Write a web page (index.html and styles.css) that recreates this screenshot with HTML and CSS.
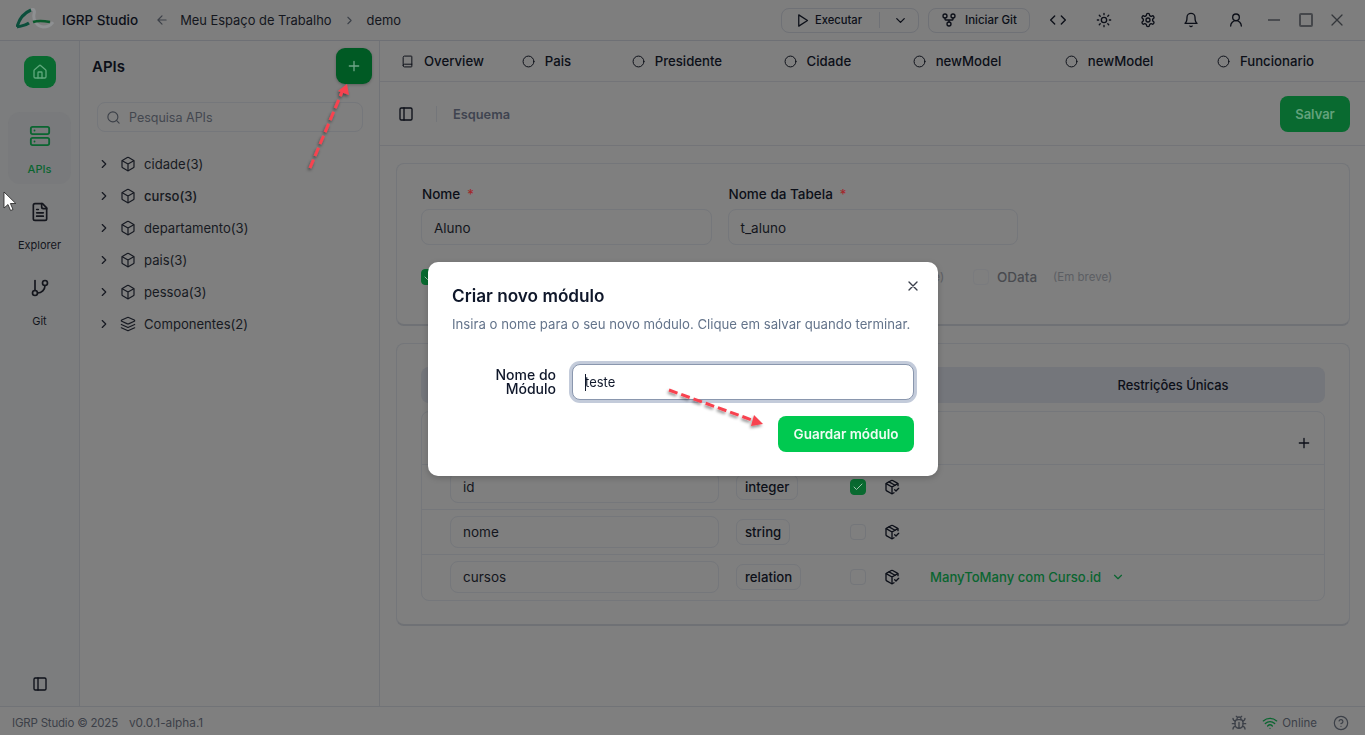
FILE: index.html
```html
<!DOCTYPE html>
<html lang="pt">
<head>
  <meta charset="UTF-8" />
  <meta name="viewport" content="width=device-width, initial-scale=1.0"/>
  <title>IGRP Studio</title>
  <link rel="stylesheet" href="styles.css">
</head>
<body>
  <svg class="sprite" xmlns="http://www.w3.org/2000/svg">
    <symbol id="i-house" viewBox="0 0 24 24"><path d="M15 21v-8a1 1 0 0 0-1-1h-4a1 1 0 0 0-1 1v8"/><path d="M3 10a2 2 0 0 1 .709-1.528l7-5.999a2 2 0 0 1 2.582 0l7 5.999A2 2 0 0 1 21 10v9a2 2 0 0 1-2 2H5a2 2 0 0 1-2-2z"/></symbol>
    <symbol id="i-server" viewBox="0 0 24 24"><rect width="20" height="8" x="2" y="2" rx="2"/><rect width="20" height="8" x="2" y="14" rx="2"/><path d="M6 6h.01M6 18h.01"/></symbol>
    <symbol id="i-file" viewBox="0 0 24 24"><path d="M15 2H6a2 2 0 0 0-2 2v16a2 2 0 0 0 2 2h12a2 2 0 0 0 2-2V7Z"/><path d="M14 2v4a2 2 0 0 0 2 2h4"/><path d="M10 9H8M16 13H8M16 17H8"/></symbol>
    <symbol id="i-branch" viewBox="0 0 24 24"><path d="M6 3v12"/><circle cx="18" cy="6" r="3"/><circle cx="6" cy="18" r="3"/><path d="M18 9a9 9 0 0 1-9 9"/></symbol>
    <symbol id="i-panel" viewBox="0 0 24 24"><rect width="18" height="18" x="3" y="3" rx="2"/><path d="M9 3v18"/></symbol>
    <symbol id="i-search" viewBox="0 0 24 24"><circle cx="11" cy="11" r="8"/><path d="m21 21-4.3-4.3"/></symbol>
    <symbol id="i-right" viewBox="0 0 24 24"><path d="m9 18 6-6-6-6"/></symbol>
    <symbol id="i-down" viewBox="0 0 24 24"><path d="m6 9 6 6 6-6"/></symbol>
    <symbol id="i-box" viewBox="0 0 24 24"><path d="M21 8a2 2 0 0 0-1-1.73l-7-4a2 2 0 0 0-2 0l-7 4A2 2 0 0 0 3 8v8a2 2 0 0 0 1 1.73l7 4a2 2 0 0 0 2 0l7-4A2 2 0 0 0 21 16Z"/><path d="m3.3 7 8.7 5 8.7-5M12 22V12"/></symbol>
    <symbol id="i-layers" viewBox="0 0 24 24"><path d="M12.83 2.18a2 2 0 0 0-1.66 0L2.6 6.08a1 1 0 0 0 0 1.83l8.58 3.91a2 2 0 0 0 1.66 0l8.58-3.9a1 1 0 0 0 0-1.83Z"/><path d="m22 17.65-9.17 4.16a2 2 0 0 1-1.66 0L2 17.65"/><path d="m22 12.65-9.17 4.16a2 2 0 0 1-1.66 0L2 12.65"/></symbol>
    <symbol id="i-back" viewBox="0 0 24 24"><path d="m12 19-7-7 7-7M19 12H5"/></symbol>
    <symbol id="i-play" viewBox="0 0 24 24"><polygon points="6 3 20 12 6 21 6 3"/></symbol>
    <symbol id="i-fork" viewBox="0 0 24 24"><circle cx="12" cy="18" r="3"/><circle cx="6" cy="6" r="3"/><circle cx="18" cy="6" r="3"/><path d="M18 9v2c0 .6-.4 1-1 1H7c-.6 0-1-.4-1-1V9M12 12v3"/></symbol>
    <symbol id="i-code" viewBox="0 0 24 24"><path d="m17 18 6-6-6-6M7 6l-6 6 6 6"/></symbol>
    <symbol id="i-sun" viewBox="0 0 24 24"><circle cx="12" cy="12" r="4"/><path d="M12 2v2M12 20v2M4.93 4.93l1.41 1.41M17.66 17.66l1.41 1.41M2 12h2M20 12h2M6.34 17.66l-1.41 1.41M19.07 4.93l-1.41 1.41"/></symbol>
    <symbol id="i-gear" viewBox="0 0 24 24"><path d="M12.22 2h-.44a2 2 0 0 0-2 2v.18a2 2 0 0 1-1 1.73l-.43.25a2 2 0 0 1-2 0l-.15-.08a2 2 0 0 0-2.73.73l-.22.38a2 2 0 0 0 .73 2.73l.15.1a2 2 0 0 1 1 1.72v.51a2 2 0 0 1-1 1.74l-.15.09a2 2 0 0 0-.73 2.73l.22.38a2 2 0 0 0 2.73.73l.15-.08a2 2 0 0 1 2 0l.43.25a2 2 0 0 1 1 1.73V20a2 2 0 0 0 2 2h.44a2 2 0 0 0 2-2v-.18a2 2 0 0 1 1-1.73l.43-.25a2 2 0 0 1 2 0l.15.08a2 2 0 0 0 2.73-.73l.22-.39a2 2 0 0 0-.73-2.73l-.15-.08a2 2 0 0 1-1-1.74v-.5a2 2 0 0 1 1-1.74l.15-.09a2 2 0 0 0 .73-2.73l-.22-.38a2 2 0 0 0-2.73-.73l-.15.08a2 2 0 0 1-2 0l-.43-.25a2 2 0 0 1-1-1.73V4a2 2 0 0 0-2-2z"/><circle cx="12" cy="12" r="3"/></symbol>
    <symbol id="i-bell" viewBox="0 0 24 24"><path d="M6 8a6 6 0 0 1 12 0c0 7 3 9 3 9H3s3-2 3-9"/><path d="M10.3 21a1.94 1.94 0 0 0 3.4 0"/></symbol>
    <symbol id="i-user" viewBox="0 0 24 24"><circle cx="12" cy="8" r="5"/><path d="M20 21a8 8 0 0 0-16 0"/></symbol>
    <symbol id="i-book" viewBox="0 0 24 24"><path d="M4 19.5v-15A2.5 2.5 0 0 1 6.5 2H19a1 1 0 0 1 1 1v18a1 1 0 0 1-1 1H6.5a1 1 0 0 1 0-5H20"/></symbol>
    <symbol id="i-circle" viewBox="0 0 24 24"><circle cx="12" cy="12" r="10"/></symbol>
    <symbol id="i-plus" viewBox="0 0 24 24"><path d="M5 12h14M12 5v14"/></symbol>
    <symbol id="i-x" viewBox="0 0 24 24"><path d="M18 6 6 18M6 6l12 12"/></symbol>
    <symbol id="i-check" viewBox="0 0 24 24"><path d="M20 6 9 17l-5-5"/></symbol>
    <symbol id="i-pack" viewBox="0 0 24 24"><path d="m16 16 2 2 4-4"/><path d="M21 10V8a2 2 0 0 0-1-1.73l-7-4a2 2 0 0 0-2 0l-7 4A2 2 0 0 0 3 8v8a2 2 0 0 0 1 1.73l7 4a2 2 0 0 0 2 0l2-1.14"/><path d="m7.5 4.27 9 5.15"/><path d="M3.29 7 12 12l8.71-5M12 22V12"/></symbol>
    <symbol id="i-bug" viewBox="0 0 24 24"><path d="m8 2 1.88 1.88M14.12 3.88 16 2M9 7.13v-1a3.003 3.003 0 1 1 6 0v1"/><path d="M12 20c-3.3 0-6-2.7-6-6v-3a4 4 0 0 1 4-4h4a4 4 0 0 1 4 4v3c0 3.3-2.7 6-6 6M12 20v-9"/><path d="M6.53 9C4.6 8.8 3 7.1 3 5M6 13H2M3 21c0-2.1 1.7-3.9 3.8-4M20.97 5c0 2.1-1.6 3.8-3.5 4M22 13h-4M17.2 17c2.1.1 3.8 1.9 3.8 4"/></symbol>
    <symbol id="i-wifi" viewBox="0 0 24 24"><path d="M12 20h.01M2 8.82a15 15 0 0 1 20 0M5 12.859a10 10 0 0 1 14 0M8.5 16.429a5 5 0 0 1 7 0"/></symbol>
    <symbol id="i-help" viewBox="0 0 24 24"><circle cx="12" cy="12" r="10"/><path d="M9.09 9a3 3 0 0 1 5.83 1c0 2-3 3-3 3M12 17h.01"/></symbol>
  </svg>

  <header class="titlebar">
    <svg class="logo" viewBox="0 0 38 24" xmlns="http://www.w3.org/2000/svg">
      <path d="M15 2C18 0 19 3 18 6 17 11 20 18 27 19 31 19 35 17 37 14" fill="none" stroke="#8e9092" stroke-width="3"/>
      <path d="M1 19C3 11 8 5 15 2" fill="none" stroke="#0c4f3c" stroke-width="3"/>
      <path d="M1 19C5 18 9 18 13 15" fill="none" stroke="#0c4f3c" stroke-width="3"/>
      <path d="M17 14C23 12 29 13 34 14" fill="none" stroke="#0a5a2c" stroke-width="2.6"/>
    </svg>
    <span class="app-name">IGRP Studio</span>
    <svg class="ico ico-back"><use href="#i-back"/></svg>
    <span class="crumb">Meu Espaço de Trabalho</span>
    <svg class="ico ico-crumb"><use href="#i-right"/></svg>
    <span class="crumb">demo</span>

    <div class="title-actions">
      <div class="run-group">
        <svg class="ico ico-16"><use href="#i-play"/></svg>
        <span>Executar</span>
        <i class="run-sep"></i>
        <svg class="ico ico-16 run-more"><use href="#i-down"/></svg>
      </div>
      <div class="git-btn">
        <svg class="ico ico-16"><use href="#i-fork"/></svg>
        <span>Iniciar Git</span>
      </div>
      <svg class="ico ico-16 act act-code"><use href="#i-code"/></svg>
      <svg class="ico ico-16 act act-sun"><use href="#i-sun"/></svg>
      <svg class="ico ico-16 act"><use href="#i-gear"/></svg>
      <svg class="ico ico-16 act act-bell"><use href="#i-bell"/></svg>
      <svg class="ico ico-16 act act-user"><use href="#i-user"/></svg>
    </div>
    <div class="window-btns">
      <i class="win-min"></i>
      <i class="win-max"></i>
      <svg class="ico win-close"><use href="#i-x"/></svg>
    </div>
  </header>

  <div class="workspace">
    <nav class="rail">
      <div class="home-btn"><svg class="ico ico-16"><use href="#i-house"/></svg></div>
      <div class="rail-item active"><svg class="ico ico-22"><use href="#i-server"/></svg><span>APIs</span></div>
      <div class="rail-item"><svg class="ico ico-20"><use href="#i-file"/></svg><span>Explorer</span></div>
      <div class="rail-item"><svg class="ico ico-20"><use href="#i-branch"/></svg><span>Git</span></div>
      <svg class="ico ico-16 rail-toggle"><use href="#i-panel"/></svg>
    </nav>

    <aside class="panel">
      <div class="panel-head">
        <h2>APIs</h2>
        <div class="add-btn"><svg class="ico ico-16"><use href="#i-plus"/></svg></div>
      </div>
      <div class="search">
        <svg class="ico ico-search"><use href="#i-search"/></svg>
        <span>Pesquisa APIs</span>
      </div>
      <ul class="tree">
        <li><svg class="ico chev"><use href="#i-right"/></svg><svg class="ico ico-16"><use href="#i-box"/></svg><span>cidade(3)</span></li>
        <li class="current"><svg class="ico chev"><use href="#i-right"/></svg><svg class="ico ico-16"><use href="#i-box"/></svg><span>curso(3)</span></li>
        <li><svg class="ico chev"><use href="#i-right"/></svg><svg class="ico ico-16"><use href="#i-box"/></svg><span>departamento(3)</span></li>
        <li><svg class="ico chev"><use href="#i-right"/></svg><svg class="ico ico-16"><use href="#i-box"/></svg><span>pais(3)</span></li>
        <li><svg class="ico chev"><use href="#i-right"/></svg><svg class="ico ico-16"><use href="#i-box"/></svg><span>pessoa(3)</span></li>
        <li><svg class="ico chev"><use href="#i-right"/></svg><svg class="ico ico-16"><use href="#i-layers"/></svg><span>Componentes(2)</span></li>
      </ul>
    </aside>

    <main class="main">
      <div class="tabs">
        <div class="tab tab-first"><svg class="ico ico-tab"><use href="#i-book"/></svg><span>Overview</span></div>
        <div class="tab tab-short"><svg class="ico ico-tab"><use href="#i-circle"/></svg><span>Pais</span></div>
        <div class="tab"><svg class="ico ico-tab"><use href="#i-circle"/></svg><span>Presidente</span></div>
        <div class="tab"><svg class="ico ico-tab"><use href="#i-circle"/></svg><span>Cidade</span></div>
        <div class="tab tab-model"><svg class="ico ico-tab"><use href="#i-circle"/></svg><span>newModel</span></div>
        <div class="tab tab-model"><svg class="ico ico-tab"><use href="#i-circle"/></svg><span>newModel</span></div>
        <div class="tab"><svg class="ico ico-tab"><use href="#i-circle"/></svg><span>Funcionario</span></div>
      </div>

      <div class="toolbar">
        <svg class="ico ico-16"><use href="#i-panel"/></svg>
        <i class="tool-sep"></i>
        <span class="tool-title">Esquema</span>
        <div class="save-btn">Salvar</div>
      </div>

      <div class="content">
        <section class="card card-meta">
          <div class="fields">
            <div class="field">
              <label>Nome <b>*</b></label>
              <div class="text-box">Aluno</div>
            </div>
            <div class="field">
              <label>Nome da Tabela <b>*</b></label>
              <div class="text-box">t_aluno</div>
            </div>
          </div>
          <div class="protocols">
            <div class="check on"><svg class="ico"><use href="#i-check"/></svg></div>
            <span class="soon soon-hidden">(Em breve)</span>
            <div class="check faint"></div>
            <span class="proto-name">OData</span>
            <span class="soon">(Em breve)</span>
          </div>
        </section>

        <section class="card card-cols">
          <div class="subtabs"><span>Restrições Únicas</span></div>
          <div class="grid-box">
            <div class="grid-head"><svg class="ico ico-16"><use href="#i-plus"/></svg></div>
            <div class="grid-row">
              <div class="text-box cell-name">id</div>
              <span class="type-pill">integer</span>
              <div class="check on"><svg class="ico"><use href="#i-check"/></svg></div>
              <svg class="ico ico-16"><use href="#i-pack"/></svg>
            </div>
            <div class="grid-row">
              <div class="text-box cell-name">nome</div>
              <span class="type-pill">string</span>
              <div class="check"></div>
              <svg class="ico ico-16"><use href="#i-pack"/></svg>
            </div>
            <div class="grid-row">
              <div class="text-box cell-name">cursos</div>
              <span class="type-pill">relation</span>
              <div class="check"></div>
              <svg class="ico ico-16"><use href="#i-pack"/></svg>
              <div class="relation">
                <span>ManyToMany com Curso.id</span>
                <svg class="ico rel-chev"><use href="#i-down"/></svg>
              </div>
            </div>
          </div>
        </section>
      </div>
    </main>
  </div>

  <footer class="statusbar">
    <span class="copyright">IGRP Studio © 2025</span>
    <span class="version">v0.0.1-alpha.1</span>
    <svg class="ico ico-16 st-bug"><use href="#i-bug"/></svg>
    <svg class="ico ico-16 st-wifi"><use href="#i-wifi"/></svg>
    <span>Online</span>
    <svg class="ico ico-help"><use href="#i-help"/></svg>
  </footer>

  <div class="dialog-wrap">
    <div class="dialog">
      <svg class="ico dialog-close"><use href="#i-x"/></svg>
      <h3>Criar novo módulo</h3>
      <p>Insira o nome para o seu novo módulo. Clique em salvar quando terminar.</p>
      <div class="dialog-field">
        <label for="mod">Nome do Módulo</label>
        <div class="mod-input">
          <input id="mod" type="text" value="teste" readonly>
          <i class="caret"></i>
        </div>
      </div>
      <div class="dialog-foot"><div class="guardar">Guardar módulo</div></div>
    </div>
  </div>

  <!-- red tutorial arrows and the pointer drawn over the capture -->
  <svg class="marks" viewBox="0 0 1365 735" xmlns="http://www.w3.org/2000/svg">
    <defs>
      <filter id="soft" x="-30%" y="-30%" width="160%" height="160%"><feDropShadow dx="-1" dy="2" stdDeviation="1.6" flood-color="#000" flood-opacity=".45"/></filter>
    </defs>
    <g filter="url(#soft)" fill="#f8434f">
      <path d="M310 168 342 92" fill="none" stroke="#f8434f" stroke-width="3" stroke-dasharray="9 4"/>
      <path d="M347 84 349 95 338 91z"/>
      <path d="M669 390 752 420" fill="none" stroke="#f8434f" stroke-width="3" stroke-dasharray="9 4"/>
      <path d="M763 424 751 426 754 415z"/>
    </g>
    <path class="pointer" d="M4 192v16l4-3.5 2.6 6 2.4-1-2.6-6h5.4z"/>
  </svg>
</body>
</html>
```

FILE: styles.css
```css
* {
  box-sizing: border-box;
}

html, body {
  margin: 0;
  padding: 0;
  height: 100%;
  overflow: hidden;
}

body {
  display: flex;
  flex-direction: column;
  background: #7f7f7f;
  color: #0c0f18;
  font-family: Inter, 'Noto Sans', sans-serif;
  font-size: 14px;
}

.sprite {
  display: none;
}

.ico {
  width: 16px;
  height: 16px;
  flex: none;
  fill: none;
  stroke: currentColor;
  stroke-width: 2;
  stroke-linecap: round;
  stroke-linejoin: round;
}

.ico-20 { width: 20px; height: 20px; }
.ico-22 { width: 22px; height: 22px; }

/* title bar */
.titlebar {
  height: 41px;
  flex: none;
  display: flex;
  align-items: center;
  padding-left: 16px;
  border-bottom: 1px solid #6e7075;
  background: #7e7e7e;
}

.logo {
  width: 38px;
  height: 24px;
  margin-right: 8px;
}

.app-name {
  font-size: 13.5px;
  font-weight: 500;
  margin-right: 17px;
}

.ico-back {
  width: 14px;
  height: 14px;
  color: #3c4048;
  margin-right: 11px;
}

.crumb {
  font-size: 12.9px;
  color: #14161d;
}

.ico-crumb {
  width: 13px;
  height: 13px;
  color: #3c4048;
  margin: 0 11px;
}

.title-actions {
  margin-left: auto;
  display: flex;
  align-items: center;
}

.run-group, .git-btn {
  height: 25px;
  display: flex;
  align-items: center;
  border: 1px solid #6f7176;
  border-radius: 8px;
  font-size: 11.2px;
  font-weight: 500;
}

.run-group {
  width: 138px;
  padding-left: 13px;
  gap: 5px;
}

.run-group .ico-16 { width: 15px; height: 15px; }

.run-sep {
  width: 1px;
  height: 16px;
  background: #6f7176;
  margin-left: 12px;
}

.run-more {
  margin-left: 8px;
}

.git-btn {
  width: 102px;
  margin-left: 9px;
  padding-left: 12px;
  gap: 8px;
  font-size: 11.5px;
}

.act {
  margin-left: 28px;
}

.act-code { margin-left: 20px; }
.act-sun { margin-left: 30px; }
.act-bell { margin-left: 27px; }
.act-user { margin-left: 29px; }

.window-btns {
  display: flex;
  align-items: center;
  margin: 0 18px 0 24px;
}

.win-min {
  width: 12px;
  height: 2px;
  background: #4a4c50;
  margin-right: 19px;
}

.win-max {
  width: 14px;
  height: 14px;
  border: 2px solid #45474b;
  border-radius: 2px;
  margin-right: 14px;
}

.win-close {
  width: 20px;
  height: 20px;
  color: #33363a;
  stroke-width: 1.5;
}

/* body of the app */
.workspace {
  flex: 1;
  min-height: 0;
  display: flex;
}

.rail {
  width: 80px;
  flex: none;
  display: flex;
  flex-direction: column;
  align-items: center;
  padding-top: 15px;
  background: #7c7d7e;
  border-right: 1px solid #717377;
}

.home-btn {
  width: 32px;
  height: 32px;
  display: flex;
  align-items: center;
  justify-content: center;
  border-radius: 9px;
  background: #096a30;
  color: #5fa87c;
  margin-bottom: 24px;
}

.rail-item {
  width: 63px;
  height: 72px;
  margin-bottom: 4px;
  padding-top: 14px;
  display: flex;
  flex-direction: column;
  align-items: center;
  gap: 16px;
  border-radius: 12px;
  font-size: 11px;
  color: #14161d;
}

.rail-item.active {
  background: #797a7c;
  color: #0a6530;
  font-weight: 500;
  padding-top: 13px;
  gap: 15px;
}

.rail-toggle {
  margin-top: auto;
  margin-bottom: 14px;
}

.panel {
  width: 300px;
  flex: none;
  border-right: 1px solid #717377;
  padding: 7px 7px 0 12px;
}

.panel-head {
  display: flex;
  justify-content: space-between;
  align-items: center;
  margin-bottom: 18px;
}

.panel-head h2 {
  margin: 0;
  font-size: 15px;
  font-weight: 600;
}

.add-btn {
  width: 36px;
  height: 36px;
  display: flex;
  align-items: center;
  justify-content: center;
  border-radius: 9px;
  background: #005a24;
  color: #6fa588;
  box-shadow: 0 1px 3px rgba(0, 0, 0, .25);
}

.search {
  width: 266px;
  height: 30px;
  margin-left: 5px;
  display: flex;
  align-items: center;
  gap: 8px;
  padding-left: 8px;
  border: 1px solid #75777b;
  border-radius: 8px;
  font-size: 12.5px;
  color: #43474f;
}

.ico-search {
  width: 15px;
  height: 15px;
  stroke-width: 1.8;
  color: #3c4048;
}

.tree {
  list-style: none;
  margin: 16px 0 0 5px;
  padding: 0;
}

.tree li {
  height: 32px;
  display: flex;
  align-items: center;
  font-size: 13.1px;
  color: #171a22;
}

.tree .chev {
  width: 14px;
  height: 14px;
  margin-right: 9px;
}

.tree .ico-16 {
  stroke-width: 1.8;
  margin-right: 8px;
}

.tree .current {
  font-weight: 500;
}

.main {
  flex: 1;
  min-width: 0;
  display: flex;
  flex-direction: column;
}

.tabs {
  height: 41px;
  flex: none;
  display: flex;
  align-items: center;
  padding-left: 21px;
  border-bottom: 1px solid #737478;
}

.tab {
  display: flex;
  align-items: center;
  gap: 10px;
  padding-right: 61.5px;
  font-size: 13.2px;
  font-weight: 500;
  white-space: nowrap;
}

.tab-first { padding-right: 38px; }
.tab-short { padding-right: 60.5px; }
.tab-model { padding-right: 63.5px; }

.ico-tab {
  width: 13px;
  height: 13px;
  stroke-width: 1.8;
}

.toolbar {
  height: 64px;
  flex: none;
  display: flex;
  align-items: center;
  padding: 0 15px 0 18px;
  border-bottom: 1px solid #737478;
}

.tool-sep {
  width: 1px;
  height: 16px;
  background: #74767a;
  margin: 0 16px 0 22px;
}

.tool-title {
  padding-top: 1px;
  font-size: 12.8px;
  font-weight: 600;
  color: #3f4450;
}

.save-btn {
  margin-left: auto;
  width: 70px;
  height: 36px;
  display: flex;
  align-items: center;
  justify-content: center;
  border-radius: 8px;
  background: #096a30;
  color: #63a27c;
  font-size: 13px;
  font-weight: 600;
}

.content {
  padding: 17px 15px 0 16px;
}

.card {
  border: 1px solid #74767a;
  border-bottom: 2px solid #6f7175;
  border-radius: 8px;
  padding: 24px;
}

.card-meta {
  height: 163px;
  margin-bottom: 17px;
}

.card-cols {
  height: 283px;
  padding-top: 23px;
}

.fields {
  display: flex;
  gap: 16px;
}

.field {
  width: 290.5px;
}

.field label {
  display: block;
  height: 22px;
  margin-top: -2px;
  padding-left: 1px;
  font-size: 13.5px;
  font-weight: 500;
  line-height: 16px;
}

.field label b {
  color: #a3282c;
  font-weight: 500;
  margin-left: 3px;
}

.field .text-box {
  margin-top: 1px;
  padding-top: 1px;
}

.text-box {
  height: 36px;
  display: flex;
  align-items: center;
  padding-left: 12px;
  border: 1px solid #75777b;
  border-radius: 8px;
  font-size: 13.5px;
  color: #14161d;
}

.protocols {
  display: flex;
  align-items: center;
  margin-top: 24px;
}

.check {
  width: 16px;
  height: 16px;
  flex: none;
  display: flex;
  align-items: center;
  justify-content: center;
  border: 1px solid #74767a;
  border-radius: 4px;
}

.check.on {
  background: #096a30;
  border-color: #096a30;
  color: #9fc3ad;
}

.check .ico {
  width: 12px;
  height: 12px;
}

.check.faint {
  border-color: #7a7b7e;
  margin-left: 30px;
}

.proto-name {
  margin-left: 8px;
  font-size: 13.5px;
  font-weight: 500;
  color: #494b50;
}

.soon {
  margin-left: 16px;
  font-size: 11.5px;
  color: #5c5e63;
}

.soon-hidden {
  margin-left: 448px;
  width: 58px;
  white-space: nowrap;
}

.subtabs {
  height: 36px;
  display: flex;
  align-items: center;
  justify-content: flex-end;
  padding-right: 53px;
  border-radius: 8px;
  background: #74767b;
  font-size: 12.9px;
  font-weight: 500;
  margin-bottom: 8px;
}

.subtabs span {
  width: 198px;
  text-align: center;
}

.grid-box {
  border: 1px solid #75777b;
  border-radius: 8px;
}

.grid-head {
  height: 53px;
  display: flex;
  align-items: center;
  justify-content: flex-end;
  padding: 10px 12px 0 0;
  border-bottom: 1px solid #75777b;
}

.grid-row {
  height: 45px;
  display: grid;
  grid-template-columns: 286px 114px 34px 46px auto;
  justify-items: start;
  align-items: center;
  padding-left: 28px;
  border-bottom: 1px solid #75777b;
}

.grid-row:last-child {
  border-bottom-color: transparent;
}

.cell-name {
  width: 269px;
  height: 32px;
}

.type-pill {
  height: 26px;
  padding: 0 8px;
  display: flex;
  align-items: center;
  border: 1px solid #75777b;
  border-radius: 7px;
  font-size: 13.2px;
  font-weight: 500;
}

.relation {
  display: flex;
  align-items: center;
  gap: 10px;
  font-size: 13.1px;
  font-weight: 500;
  color: #0a6530;
}

.rel-chev {
  width: 14px;
  height: 14px;
}

.statusbar {
  height: 29px;
  flex: none;
  display: flex;
  align-items: center;
  padding: 4px 16px 0 12px;
  border-top: 1px solid #717377;
  font-size: 11.5px;
  color: #3c4048;
}

.copyright {
  letter-spacing: -.2px;
}

.version {
  margin-left: 11px;
  margin-right: auto;
  font-size: 11.8px;
}

.st-bug {
  margin-right: 15px;
}

.st-wifi {
  color: #0a6530;
  margin-right: 4px;
}

.ico-help {
  width: 16px;
  height: 16px;
  margin-left: 16px;
  stroke-width: 1.8;
}

/* dialog */
.dialog-wrap {
  position: fixed;
  inset: 0;
  display: flex;
  justify-content: center;
  align-items: center;
  padding: 3px 0 0 1px;
}

.dialog {
  position: relative;
  width: 510px;
  height: 214px;
  padding: 24px;
  border-radius: 10px;
  background: #fff;
  box-shadow: 0 2px 6px rgba(0, 0, 0, .2);
  color: #0f172a;
}

.dialog-close {
  position: absolute;
  top: 16px;
  right: 17px;
  color: #3a3f4b;
}

.dialog h3 {
  margin: 0;
  font-size: 17.2px;
  line-height: 20px;
  font-weight: 600;
}

.dialog p {
  margin: 9px 0 0;
  font-size: 13.2px;
  line-height: 18px;
  color: #64748b;
  white-space: nowrap;
}

.dialog-field {
  display: flex;
  align-items: center;
  gap: 16px;
  margin-top: 31px;
}

.dialog-field label {
  width: 104px;
  flex: none;
  text-align: right;
  font-size: 14px;
  line-height: 14px;
  font-weight: 500;
}

.mod-input {
  position: relative;
  flex: 1;
}

.mod-input input {
  display: block;
  width: 100%;
  height: 36px;
  padding: 0 12px;
  border: 1px solid #8a97ae;
  border-radius: 8px;
  outline: none;
  box-shadow: 0 0 0 3px #c3cbda;
  font: 13px Inter, 'Noto Sans', sans-serif;
  color: #0f172a;
}

.caret {
  position: absolute;
  left: 13px;
  top: 10px;
  width: 1px;
  height: 17px;
  background: #0f172a;
}

.dialog-foot {
  display: flex;
  justify-content: flex-end;
  margin-top: 16px;
}

.guardar {
  width: 136px;
  height: 36px;
  display: flex;
  align-items: center;
  justify-content: center;
  border-radius: 8px;
  background: #00c950;
  color: #eefcf3;
  font-size: 13.5px;
  font-weight: 600;
}

.marks {
  position: fixed;
  inset: 0;
  width: 1365px;
  height: 735px;
  pointer-events: none;
}

.pointer {
  fill: #fff;
  stroke: #222;
  stroke-width: .8;
}
```
